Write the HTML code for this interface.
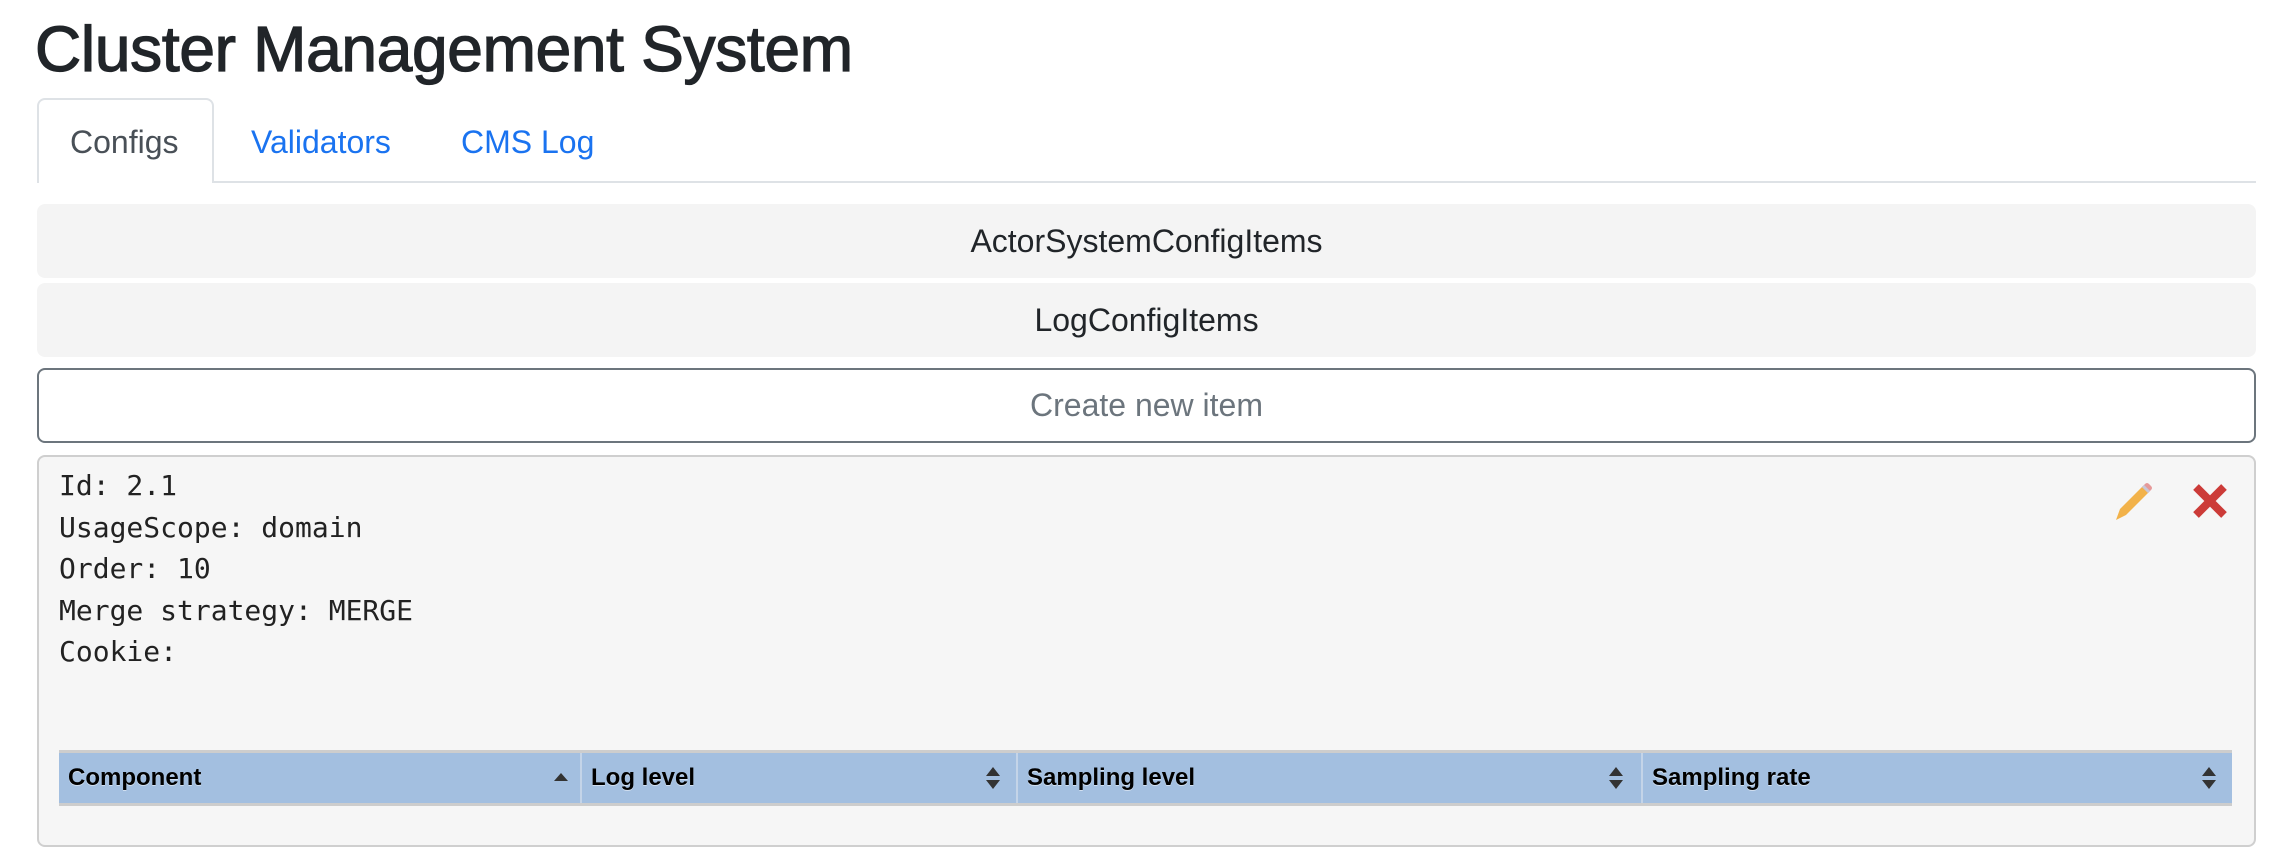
<!DOCTYPE html>
<html><head><meta charset="utf-8"><style>
html,body{margin:0;padding:0;background:#fff;width:2294px;height:858px;overflow:hidden}
body{font-family:"Liberation Sans",Arial,sans-serif;color:#212529;position:relative}
.abs{position:absolute}
h1{position:absolute;left:35px;top:4px;margin:0;font-size:64px;font-weight:normal;-webkit-text-stroke:1.3px #212529;line-height:90px;color:#212529;letter-spacing:-0.3px}
.tabline{left:37px;top:181px;width:2219px;height:2px;background:#dee2e6}
.tab{top:98px;left:37px;width:177px;height:85px;border:2px solid #dee2e6;border-bottom:none;border-radius:8px 8px 0 0;background:#fff;box-sizing:border-box}
.tt{font-size:32px;top:122px;line-height:40px}
.acc{left:37px;width:2219px;height:74px;background:#f4f4f4;border-radius:8px;font-size:32px;line-height:74px;text-align:center;color:#212529}
.btn{left:37px;top:368px;width:2219px;height:75px;box-sizing:border-box;border:2px solid #6c757d;border-radius:8px;font-size:32px;line-height:71px;text-align:center;color:#6c757d}
.panel{left:37px;top:455px;width:2219px;height:392px;box-sizing:border-box;border:2px solid #cfcfcf;border-radius:8px;background:#f6f6f6}
.mono{left:59px;top:465px;font-family:"DejaVu Sans Mono","Liberation Mono",monospace;font-size:28px;line-height:41.5px;color:#222;white-space:pre}
.hdr{left:59px;top:750px;width:2173px;height:56px;background:#a3bfe0;border-top:3px solid #cdcdcd;border-bottom:3px solid #cdcdcd;box-sizing:border-box}
.col{position:absolute;top:0;height:50px;font-weight:bold;font-size:24px;line-height:50px;color:#000;text-shadow:0 1px 0 rgba(255,255,255,.5);padding-left:9px;box-sizing:border-box}
.sep{position:absolute;top:0;width:2px;height:50px;background:#c4d4e8}
.srt{position:absolute;top:14px}
</style></head><body>
<h1>Cluster Management System</h1>
<div class="abs tabline"></div>
<div class="abs tab"></div>
<div class="abs tt" style="left:70px;color:#495057">Configs</div>
<div class="abs tt" style="left:251px;color:#1a73f0">Validators</div>
<div class="abs tt" style="left:461px;color:#1a73f0">CMS Log</div>
<div class="abs acc" style="top:204px">ActorSystemConfigItems</div>
<div class="abs acc" style="top:283px">LogConfigItems</div>
<div class="abs btn">Create new item</div>
<div class="abs panel"></div>
<div class="abs mono">Id: 2.1
UsageScope: domain
Order: 10
Merge strategy: MERGE
Cookie:</div>
<svg class="abs" style="left:2113px;top:480px" width="42" height="42" viewBox="0 0 42 42">
<path d="M3 40 L7 29 L30 6 L36 12 L13 35 Z" fill="#f2b24a"/>
<path d="M29 7 L32 4 Q34 2 36 4 L38 6 Q40 8 38 10 L35 13 Z" fill="#e69a9a"/>
<path d="M30 6 L36 12" stroke="#c8c8d8" stroke-width="3"/>
</svg>
<svg class="abs" style="left:2191px;top:482px" width="38" height="38" viewBox="0 0 38 38">
<path d="M5 5 L33 33 M33 5 L5 33" stroke="#cc3b38" stroke-width="8" stroke-linecap="butt"/>
</svg>
<div class="abs hdr">
<div class="col" style="left:0;width:521px">Component</div>
<svg class="srt" style="left:494px;top:19px" width="16" height="10"><path d="M1 9 L8 1 L15 9Z" fill="#333"/></svg>
<div class="sep" style="left:521px"></div>
<div class="col" style="left:523px;width:434px">Log level</div>
<svg class="srt" style="left:927px" width="14" height="22"><path d="M0 9 L7 0 L14 9Z M0 13 L7 22 L14 13Z" fill="#333"/></svg>
<div class="sep" style="left:957px"></div>
<div class="col" style="left:959px;width:623px">Sampling level</div>
<svg class="srt" style="left:1550px" width="14" height="22"><path d="M0 9 L7 0 L14 9Z M0 13 L7 22 L14 13Z" fill="#333"/></svg>
<div class="sep" style="left:1582px"></div>
<div class="col" style="left:1584px;width:589px">Sampling rate</div>
<svg class="srt" style="left:2143px" width="14" height="22"><path d="M0 9 L7 0 L14 9Z M0 13 L7 22 L14 13Z" fill="#333"/></svg>
</div>
</body></html>
